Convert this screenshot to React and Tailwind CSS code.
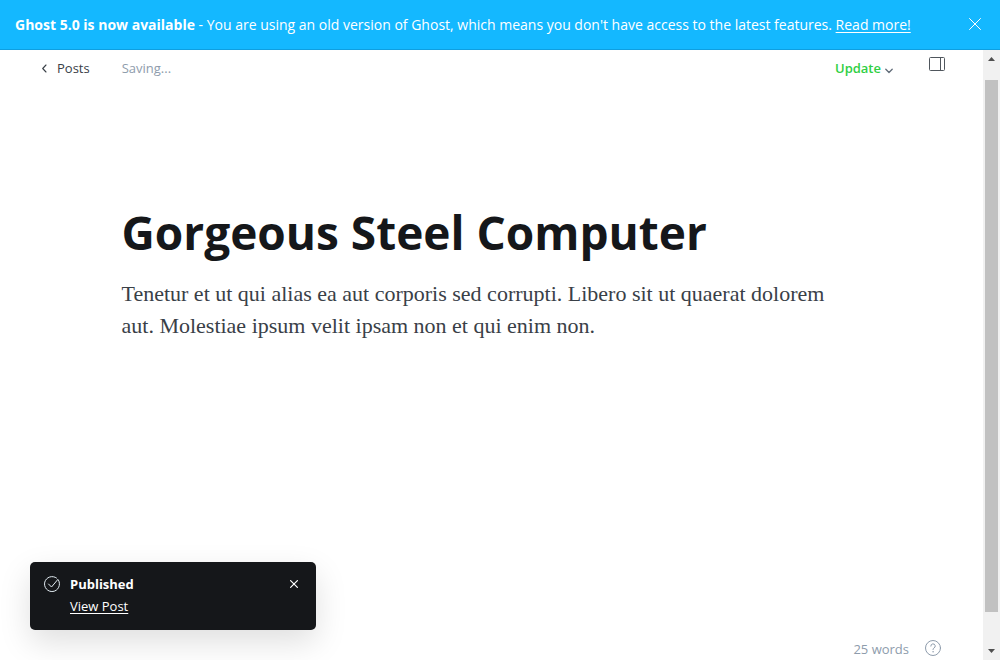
import React from "react";

function Banner() {
  return (
    <aside className="flex h-[50px] shrink-0 items-center justify-between border-b border-[#0f9fe0] bg-[#14b8ff] pr-[18px] pl-[15px] text-white">
      <p className="text-sm whitespace-nowrap">
        <strong className="font-bold">Ghost 5.0 is now available</strong> - You are using an old version of Ghost, which
        means you don't have access to the latest features.{" "}
        <a href="#upgrade" className="underline underline-offset-2">
          Read more!
        </a>
      </p>
      <button type="button" aria-label="Dismiss announcement" className="pb-px">
        <svg className="size-[14px]" viewBox="0 0 14 14" fill="none" stroke="currentColor" strokeLinecap="round">
          <path d="M1.500 1.500l11 11M12.500 1.500l-11 11" />
        </svg>
      </button>
    </aside>
  );
}

function EditorHeader() {
  return (
    <header className="flex h-[38px] items-center justify-between pr-[38px] pl-10 text-[13px]">
      <div className="flex items-center gap-8">
        <a href="#posts" className="flex items-center gap-2 font-medium text-[#394047]">
          <svg className="mb-[2px] h-[9px] w-[9px]" viewBox="0 0 9 9" fill="none" stroke="currentColor" strokeWidth="1.1" strokeLinecap="round" strokeLinejoin="round">
            <path d="M6 1L2.700 4.500L6 8" />
          </svg>
          Posts
        </a>
        <span className="text-[#8e9cac]">Saving...</span>
      </div>
      <div className="flex items-center gap-9">
        <button type="button" className="flex items-center gap-1 font-semibold text-[#30cf43]">
          Update
          <svg className="mt-[3px] h-[6px] w-[8px]" viewBox="0 0 8 6" fill="none" stroke="#626d79" strokeWidth="1.3" strokeLinecap="round" strokeLinejoin="round">
            <path d="M0.800 1.200L4 4.500l3.200-3.300" />
          </svg>
        </button>
        <button type="button" aria-label="Settings" className="mb-[10px]">
          <svg className="h-[14px] w-4" viewBox="0 0 16 14" fill="none" stroke="#50565d">
            <rect x="0.500" y="0.500" width="15" height="13" rx="1" />
            <path d="M11.500 0.500v13" />
          </svg>
        </button>
      </div>
    </header>
  );
}

function Toast() {
  return (
    <div role="status" className="absolute bottom-[30px] left-[30px] flex h-[68px] w-[286px] items-start rounded-[5px] bg-[#15171a] px-[14px] pt-3 text-[13px] text-white shadow-[0_12px_32px_rgba(0,0,0,0.13)]">
      <svg className="mt-[2px] size-4 shrink-0" viewBox="0 0 16 16" fill="none" stroke="#e5eff5" strokeLinecap="round" strokeLinejoin="round">
        <path d="M14.600 4.400A7.500 7.500 0 1 1 12.500 2M4.500 8l3 3L14 3.300" />
      </svg>
      <div className="ml-[10px] flex-1">
        <p className="leading-5 font-bold">Published</p>
        <a href="#post" className="block pt-[2px] leading-5 underline underline-offset-2">
          View Post
        </a>
      </div>
      <button type="button" aria-label="Close notification" className="mt-[6px] mr-1">
        <svg className="size-2" viewBox="0 0 8 8" fill="none" stroke="currentColor" strokeWidth="1.2" strokeLinecap="round">
          <path d="M0.600 0.600l6.800 6.800M7.400 0.600L0.600 7.400" />
        </svg>
      </button>
    </div>
  );
}

function WordCount() {
  return (
    <footer className="absolute right-[42px] bottom-px flex items-center gap-4 text-[13px] text-[#8e9cac]">
      <span>25 words</span>
      <a href="#help" aria-label="Help" className="pb-[2px]">
        <svg className="size-4" viewBox="0 0 16 16" fill="none" stroke="currentColor" strokeLinecap="round">
          <circle cx="8" cy="8" r="7.500" />
          <path d="M5.800 6.100a2.200 2.200 0 1 1 3.100 2q-.9.400-.9 1.400" />
          <circle cx="8" cy="11.800" r="0.400" fill="currentColor" strokeWidth="0.500" />
        </svg>
      </a>
    </footer>
  );
}

function ScrollTrack() {
  return (
    <div aria-hidden="true" className="flex w-[17px] shrink-0 flex-col items-center bg-[#f1f1f1]">
      <svg className="my-[6px] h-[5px] w-[9px] shrink-0" viewBox="0 0 9 5" fill="#505050">
        <path d="M1 5l3.500-4L8 5z" />
      </svg>
      <div className="flex w-full flex-1 flex-col px-[2px] pt-[13px] pb-[31px]">
        <div className="flex-1 bg-[#c1c1c1]" />
      </div>
      <svg className="my-[6px] h-[5px] w-[9px] shrink-0" viewBox="0 0 9 5" fill="#505050">
        <path d="M1 0l3.500 4L8 0z" />
      </svg>
    </div>
  );
}

export default function App() {
  return (
    <div className="flex h-screen flex-col overflow-hidden bg-white font-['Open_Sans',sans-serif]">
      <Banner />
      <div className="flex min-h-0 flex-1">
        <div className="relative min-w-0 flex-1">
          <EditorHeader />
          <main className="mx-auto w-full max-w-[740px] pt-[114px]">
            <input
              aria-label="Post title"
              defaultValue="Gorgeous Steel Computer"
              className="block h-[60px] w-full text-[46px] leading-[60px] font-bold text-[#15171a] outline-none"
            />
            <p className="mt-4 font-['Liberation_Serif',serif] text-[22px] leading-8 text-[#394047]">
              Tenetur et ut qui alias ea aut corporis sed corrupti. Libero sit ut quaerat dolorem aut. Molestiae ipsum
              velit ipsam non et qui enim non.
            </p>
          </main>
          <Toast />
          <WordCount />
        </div>
        <ScrollTrack />
      </div>
    </div>
  );
}
